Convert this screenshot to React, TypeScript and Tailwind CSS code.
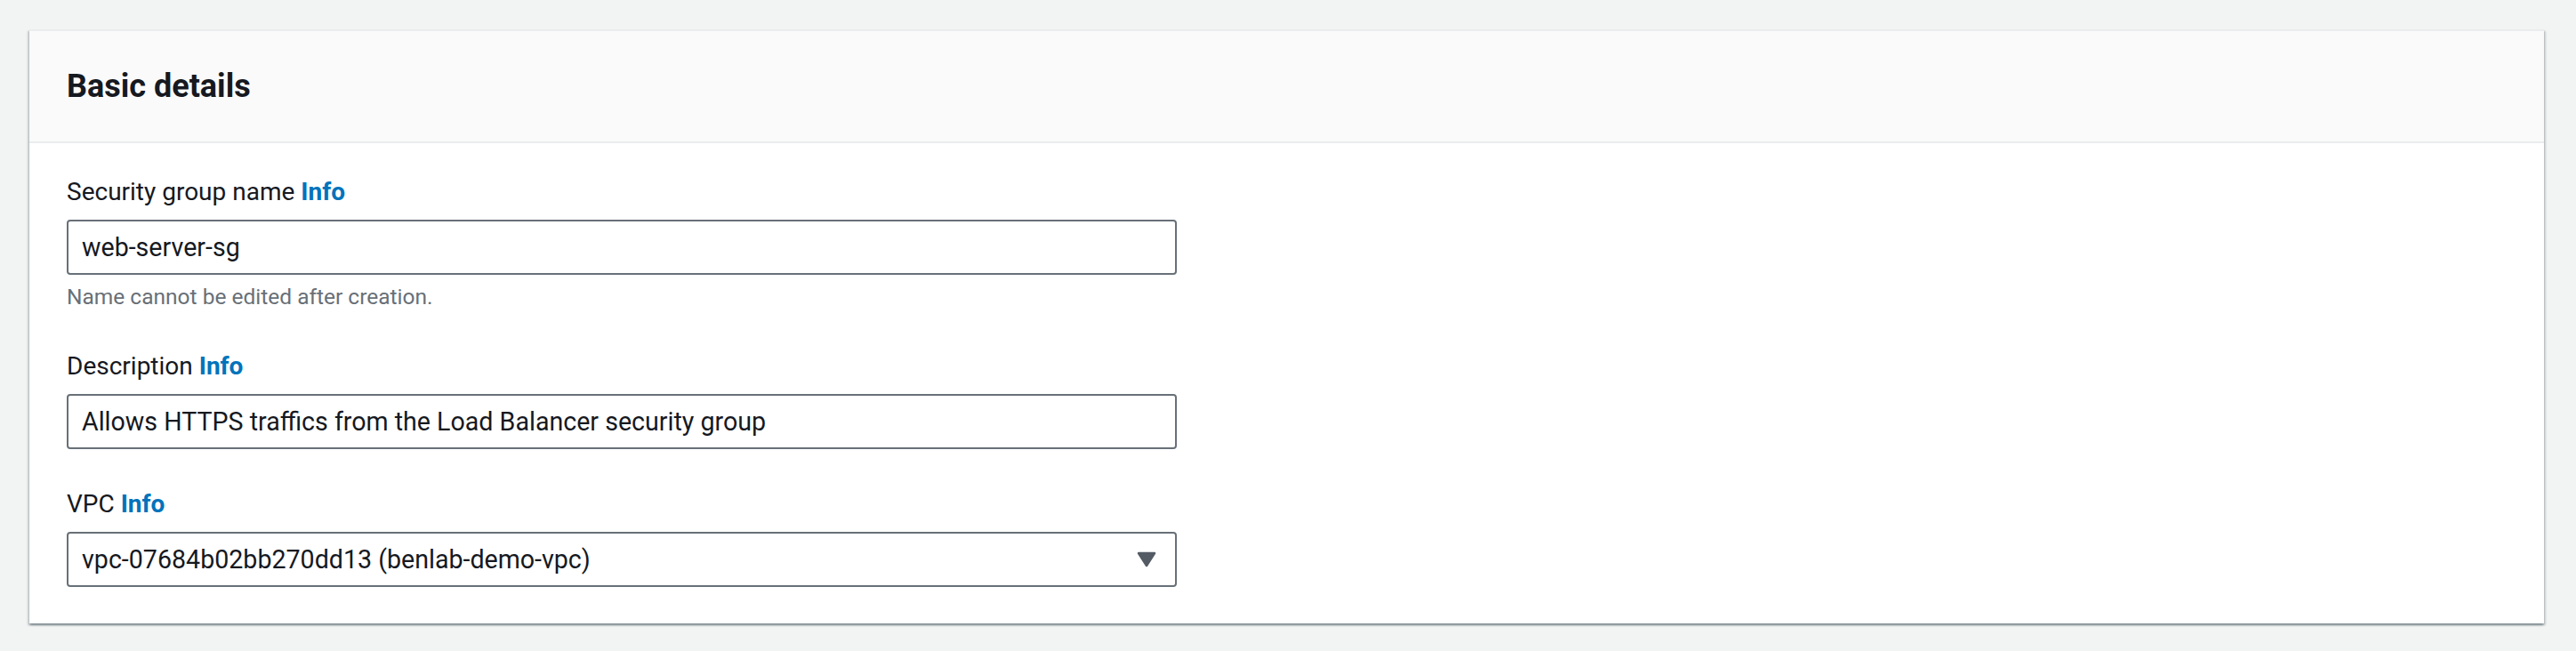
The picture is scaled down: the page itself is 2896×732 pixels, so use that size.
import React from "react";

const font = { fontFamily: 'Roboto, "Open Sans", Arial, sans-serif' };

function Label({ text }: { text: string }) {
  return (
    <div className="text-[28px] leading-[44px] text-[#16191f] whitespace-nowrap">
      {text} <span className="font-bold text-[#0073bb]">Info</span>
    </div>
  );
}

function Field({ value, select }: { value: string; select?: boolean }) {
  return (
    <div className="mt-[9px] w-[1248px] h-[62px] border-2 border-[#687078] rounded-[4px] bg-white flex items-center pl-[15px] pr-[21px]">
      <span className="flex-1 text-[28.6px] text-[#16191f] whitespace-nowrap">{value}</span>
      {select && (
        <svg width="22" height="18" viewBox="0 0 22 18">
          <polygon points="2,2 20,2 11,16" fill="#545b64" stroke="#545b64" strokeWidth="2.5" strokeLinejoin="round" />
        </svg>
      )}
    </div>
  );
}

export default function App() {
  return (
    <div className="w-[2896px] h-[732px] bg-[#f2f3f3] pt-[33px]" style={font}>
      <div className="ml-[33px] mr-[36px] bg-white border-t-2 border-[#eaeded] shadow-[0_2px_2px_0_rgba(0,28,36,0.3),2px_2px_2px_0_rgba(0,28,36,0.15),-2px_2px_2px_0_rgba(0,28,36,0.15)]">
        <div className="h-[126px] bg-[#fafafa] border-b-2 border-[#eaeded] flex items-center pl-[42px]">
          <h2 className="text-[36px] font-bold text-[#16191f] leading-[44px]">Basic details</h2>
        </div>
        <div className="pl-[42px] pt-[33px] pb-[41px] flex flex-col">
          <Label text="Security group name" />
          <Field value="web-server-sg" />
          <div className="mt-[9px] text-[24.5px] leading-[32px] text-[#687078]">Name cannot be edited after creation.</div>
          <div className="mt-[40px]">
            <Label text="Description" />
            <Field value="Allows HTTPS traffics from the Load Balancer security group" />
          </div>
          <div className="mt-[40px]">
            <Label text="VPC" />
            <Field value="vpc-07684b02bb270dd13 (benlab-demo-vpc)" select />
          </div>
        </div>
      </div>
    </div>
  );
}
